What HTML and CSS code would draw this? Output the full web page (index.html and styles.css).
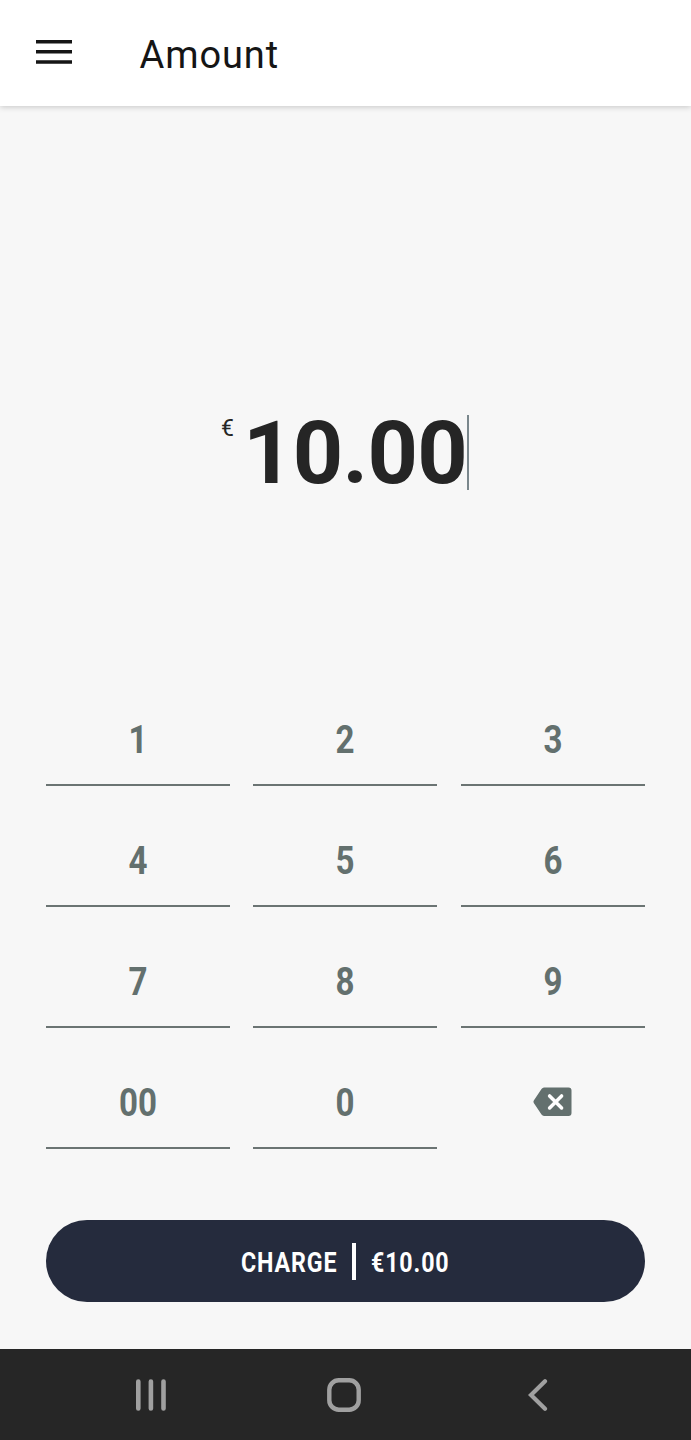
FILE: index.html
```html
<!DOCTYPE html>
<html lang="en">
<head>
  <meta charset="UTF-8">
  <meta name="viewport" content="width=device-width, initial-scale=1.0">
  <title>Amount</title>
  <link rel="stylesheet" href="styles.css">
</head>
<body>
  <header class="header">
    <svg class="menu-icon" width="36" height="24" viewBox="0 0 36 24">
      <path d="M0 1.8h36M0 11.8h36M0 22h36" stroke="#151515" stroke-width="3.6"/>
    </svg>
    <h1>Amount</h1>
  </header>

  <main class="content">
    <div class="amount">
      <span class="currency">€</span>
      <span class="value">10.00</span>
      <span class="cursor"></span>
    </div>

    <div class="keypad">
      <div class="key"><span>1</span></div>
      <div class="key"><span>2</span></div>
      <div class="key"><span>3</span></div>
      <div class="key"><span>4</span></div>
      <div class="key"><span>5</span></div>
      <div class="key"><span>6</span></div>
      <div class="key"><span>7</span></div>
      <div class="key"><span>8</span></div>
      <div class="key"><span>9</span></div>
      <div class="key"><span>00</span></div>
      <div class="key"><span>0</span></div>
      <div class="key delete">
        <svg width="39" height="30" viewBox="0 0 39 30">
          <path d="M11 .5h24.500a3 3 0 0 1 3 3v22.500a3 3 0 0 1-3 3H11q-1.500 0-2.500-1.400L.8 16q-.8-1.200 0-2.400L8.500 2Q9.500.5 11 .5z" fill="#63706e"/>
          <path d="M16.600 8.900l12 12M28.600 8.900l-12 12" stroke="#fff" stroke-width="3.500" stroke-linecap="round"/>
        </svg>
      </div>
    </div>

    <button class="charge" type="button">
      <span class="label">CHARGE</span>
      <span class="divider"></span>
      <span class="total">€10.00</span>
    </button>
  </main>

  <nav class="navbar">
    <svg width="32" height="34" viewBox="0 0 32 34">
      <path d="M3.300 3.500v27M15.900 3.500v27M28.500 3.500v27" stroke="#a0a0a0" stroke-width="4.600" stroke-linecap="round"/>
    </svg>
    <svg class="home" width="34" height="34" viewBox="0 0 34 34">
      <rect x="2.300" y="2.300" width="29.400" height="29.400" rx="9.500" fill="none" stroke="#a0a0a0" stroke-width="4.400"/>
    </svg>
    <svg width="20" height="34" viewBox="0 0 20 34">
      <path d="M17 3.300L3 17l14 13.700" fill="none" stroke="#a0a0a0" stroke-width="4.200" stroke-linecap="round"/>
    </svg>
  </nav>
</body>
</html>
```
FILE: styles.css
```css
* {
  box-sizing: border-box;
}
body {
  margin: 0;
  height: 1440px;
  display: flex;
  flex-direction: column;
  font-family: Roboto, sans-serif;
  background: #f7f7f7;
  color: #252525;
}
.header {
  height: 106px;
  flex: none;
  display: flex;
  align-items: center;
  padding-left: 36px;
  background: #fff;
  box-shadow: 0 1px 6px rgba(0, 0, 0, 0.2);
}
.menu-icon {
  margin-bottom: 2px;
}
h1 {
  margin: 3px 0 0 67.5px;
  font-size: 38px;
  font-weight: 400;
  letter-spacing: 0.9px;
  color: #151515;
}
.content {
  flex: 1;
  display: flex;
  flex-direction: column;
  padding: 0 46px 46px;
}
.amount {
  height: 76px;
  margin-top: 308px;
  padding-left: 175px;
  display: flex;
}
.currency {
  width: 22px;
  font-size: 23px;
  line-height: 29px;
}
.value {
  width: 224px;
  font-size: 88px;
  font-weight: 700;
  line-height: 77px;
  letter-spacing: -0.7px;
}
.cursor {
  width: 2px;
  height: 75px;
  margin-top: 1px;
  background: #7a878c;
}
.keypad {
  display: grid;
  grid-template-columns: repeat(3, 184px);
  grid-auto-rows: 74px;
  column-gap: 23.3px;
  row-gap: 47px;
  margin-top: 222px;
}
.key {
  display: flex;
  justify-content: center;
  padding-top: 5px;
  border-bottom: 2px solid #6b7473;
  font-size: 38.5px;
  font-weight: 700;
  line-height: 46px;
  color: #63706e;
}
.key span {
  transform: scaleX(0.86);
}
.delete {
  padding-top: 12px;
  border-bottom: none;
}
.charge {
  height: 82px;
  margin-top: 71px;
  padding: 0;
  display: flex;
  align-items: center;
  justify-content: center;
  border: none;
  border-radius: 41px;
  background: #252b3d;
  color: #fff;
  font-family: Roboto, sans-serif;
  font-size: 27px;
  font-weight: 700;
  letter-spacing: 1px;
  text-align: left;
}
.label {
  width: 96px;
  transform: scaleX(0.86);
  transform-origin: left;
  padding-top: 4px;
}
.divider {
  width: 4px;
  height: 37px;
  margin: 0 15px;
  background: #fff;
}
.total {
  width: 79px;
  padding-top: 4px;
  transform: scaleX(0.86);
  transform-origin: left;
}
.navbar {
  height: 91px;
  flex: none;
  display: flex;
  align-items: center;
  justify-content: space-between;
  padding: 1px 143px 0 135px;
  background: #262626;
}
.home {
  margin-right: 8px;
}
```
